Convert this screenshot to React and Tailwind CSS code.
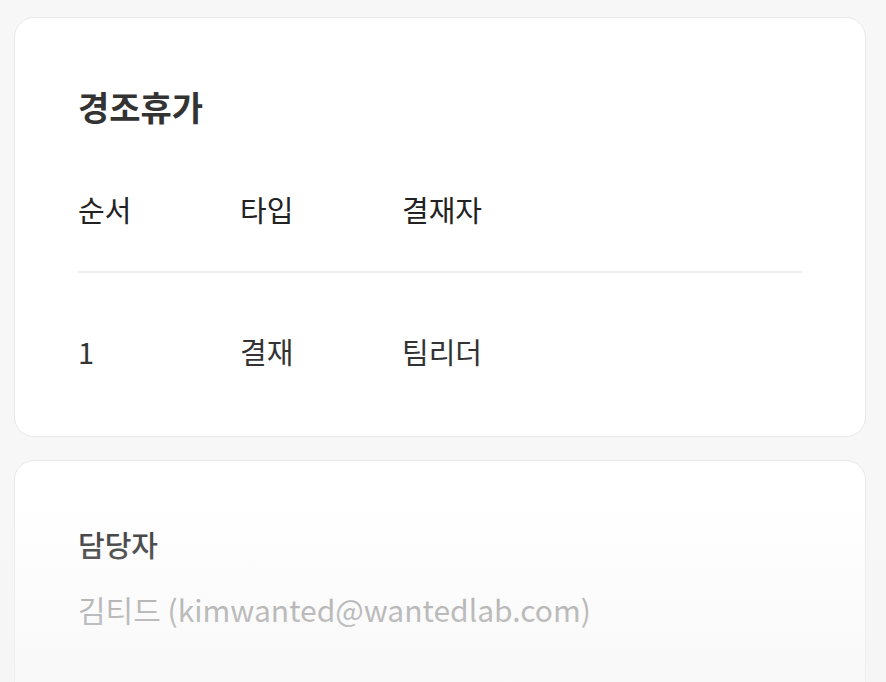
const font = { fontFamily: '"Noto Sans CJK KR", "Noto Sans", sans-serif' };

const Card = ({ children, className = "" }) => (
  <section
    className={`rounded-[20px] border border-[#e9e9e9] bg-white px-[63px] ${className}`}
  >
    {children}
  </section>
);

export default function App() {
  return (
    <div className="relative h-[682px] overflow-hidden bg-[#f7f7f7]" style={font}>
      <div className="flex flex-col gap-[23px] pl-[14px] pr-[20px] pt-[17px]">
        <Card className="pt-[68px] pb-[67px]">
          <h2 className="text-[34px] leading-[42px] font-bold text-[#333]">경조휴가</h2>

          <div className="mt-[63px] grid grid-cols-[162px_162px_1fr] pb-[44px] border-b-2 border-[#eeeeee] text-[29px] leading-[36px] font-normal text-[#222]">
            <span>순서</span>
            <span>타입</span>
            <span>결재자</span>
          </div>

          <div className="mt-[60px] grid grid-cols-[162px_162px_1fr] text-[29px] leading-[36px] text-[#333]">
            <span>1</span>
            <span>결재</span>
            <span>팀리더</span>
          </div>
        </Card>

        <Card className="pt-[65px] pb-[80px]">
          <h3 className="text-[29px] leading-[36px] font-medium text-[#333]">담당자</h3>
          <p className="mt-[29px] text-[30px] leading-[36px] text-[#999999]">
            김티드 (kimwanted@wantedlab.com)
          </p>
        </Card>
      </div>

      {/* bottom fade */}
      <div className="pointer-events-none absolute inset-x-0 bottom-0 h-[180px] bg-gradient-to-b from-transparent to-[#f4f4f4]/60" />
    </div>
  );
}
